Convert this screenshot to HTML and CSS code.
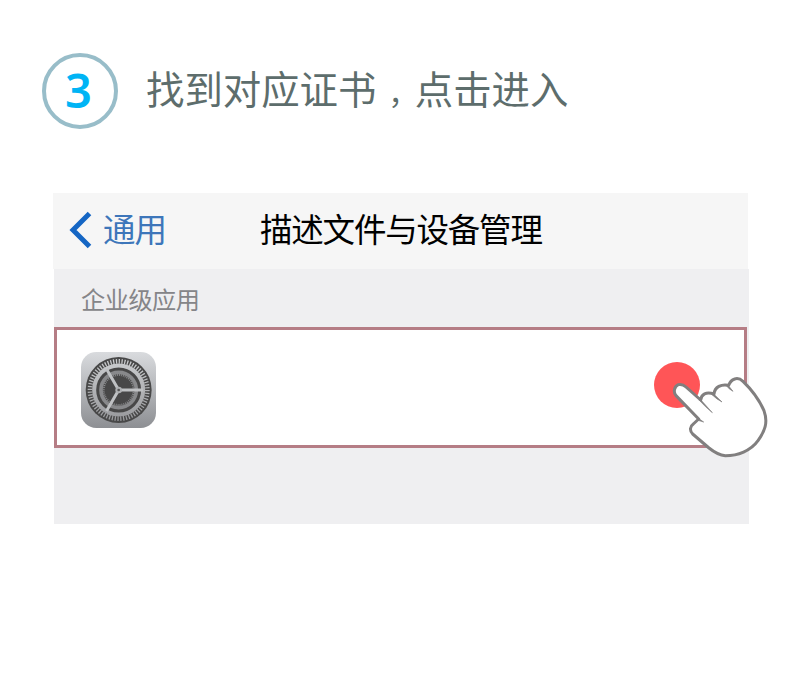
FILE: index.html
```html
<!DOCTYPE html>
<html lang="zh-CN">
<head>
<meta charset="utf-8">
<title>描述文件与设备管理</title>
<link rel="stylesheet" href="styles.css">
</head>
<body>
<main class="page">
  <header class="step">
    <span class="step-number">3</span>
    <h1 class="step-title">找到对应证书<span class="comma">，</span>点击进入</h1>
  </header>
  <section class="phone">
    <nav class="navbar">
      <svg class="back-icon" viewBox="0 0 23 38"><path d="M20.500 2.500 4 19l16.500 16.500" fill="none" stroke="#1566c4" stroke-width="5"/></svg>
      <span class="back">通用</span>
      <h2 class="nav-title">描述文件与设备管理</h2>
    </nav>
    <div class="content">
      <p class="group-label">企业级应用</p>
      <div class="row">
        <svg class="app-icon" viewBox="33 36 225 228">
          <defs>
            <linearGradient id="metal" x1="0" y1="0" x2="0" y2="1"><stop offset="0" stop-color="#d9dbde"/><stop offset="1" stop-color="#8d8f93"/></linearGradient>
            <linearGradient id="ring" gradientUnits="userSpaceOnUse" x1="147" y1="60" x2="147" y2="240"><stop offset="0" stop-color="#cbcdcf"/><stop offset="1" stop-color="#98999c"/></linearGradient>
          </defs>
          <rect x="33" y="36" width="225" height="228" rx="46" fill="url(#metal)"/>
          <circle cx="146" cy="150" r="99" fill="#484848"/>
          <circle cx="146" cy="150" r="86" fill="none" stroke="url(#ring)" stroke-width="14" pathLength="128" stroke-dasharray=".9 1.1"/>
          <circle cx="146" cy="150" r="73.500" fill="none" stroke="url(#ring)" stroke-width="12"/>
          <circle cx="146" cy="150" r="53" fill="none" stroke="#88898b" stroke-width="11"/>
          <circle cx="146" cy="150" r="45" fill="none" stroke="#88898b" stroke-width="6" pathLength="96" stroke-dasharray="1 1"/>
          <path d="M146 150h73M146 150l-36.500-63M146 150l-36.500 63" fill="none" stroke="#bfc1c3" stroke-width="9"/>
          <circle cx="146" cy="150" r="10" fill="#aeb0b2"/><circle cx="146" cy="150" r="4" fill="#555"/>
        </svg>
        <span class="touch-dot"></span>
      </div>
      <svg class="hand" viewBox="0 0 420 360">
        <path d="M176 207 108 137C99 126 103 109 115 104Q127 101 138 111L182 150C184 133 198 124 222 132C224 111 244 101 266 106C273 86 293 79 309 94Q351 134 372 182C385 218 374 244 354 272C332 303 293 317 256 317Q233 315 207 294L158 252C148 242 150 229 160 222Z" fill="#fff" stroke="#817f7f" stroke-width="9" stroke-linejoin="round"/>
        <path d="M181 148 217 188Q196 171 178 151ZM219 130 246 156Q229 147 216 134ZM263 104 279 124Q266 117 260 108ZM174 204 191 216 174 211Z" fill="#817f7f" stroke="#817f7f" stroke-width="2"/>
      </svg>
    </div>
  </section>
</main>
</body>
</html>
```

FILE: styles.css
```css
* { box-sizing: border-box; }
body { margin: 0; background: #fff; font-family: "Noto Sans CJK SC", sans-serif; }
h1, h2, p { margin: 0; font-weight: 400; white-space: nowrap; }
.page { width: 800px; height: 700px; padding: 53px 0 0 42px; overflow: hidden; }
.step { display: flex; align-items: center; height: 76px; }
.step-number {
  display: flex; align-items: center; justify-content: center;
  width: 76px; height: 76px; padding: 0 3px 2px 0;
  border: 4px solid #98bdc9; border-radius: 50%;
  color: #00b4f5; font: 600 47px/66px "Noto Sans", sans-serif;
}
.step-title { margin-left: 28px; padding-bottom: 8px; color: #5d6d6c; font-size: 38.4px; line-height: 56px; }
.comma { display: inline-block; width: 38.4px; padding-left: 12px; font-size: 30px; line-height: 40px; font-feature-settings: "halt"; }
.phone { width: 696px; margin: 64px 0 0 11px; }
.navbar { display: flex; align-items: center; width: 695px; height: 76px; padding-left: 16px; background: #f6f6f6; }
.back-icon { width: 23px; height: 38px; margin-top: -3px; }
.back { margin-left: 11px; padding-bottom: 6px; color: #3d76ba; font-size: 32.500px; line-height: 46px; letter-spacing: -1px; }
.nav-title { margin-left: 94px; padding-bottom: 6px; color: #000; font-size: 32.500px; line-height: 46px; letter-spacing: -1.200px; }
.content { position: relative; width: 695px; height: 255px; margin-left: 1px; background: #efeff1; }
.group-label { height: 58px; padding: 0 0 0 27px; color: #858588; font-size: 24.200px; line-height: 59px; letter-spacing: -.5px; }
.row {
  display: flex; align-items: center; justify-content: space-between;
  width: 693px; height: 121px; padding: 0 44px 0 24px;
  background: #fff; border: 3px solid #b57d85;
}
.app-icon { width: 75px; height: 76px; margin-top: 5px; }
.touch-dot { width: 46px; height: 46px; margin-top: -5px; border-radius: 50%; background: #ff5557; }
.hand { position: absolute; left: 586px; top: 81px; width: 140px; height: 120px; }
```
